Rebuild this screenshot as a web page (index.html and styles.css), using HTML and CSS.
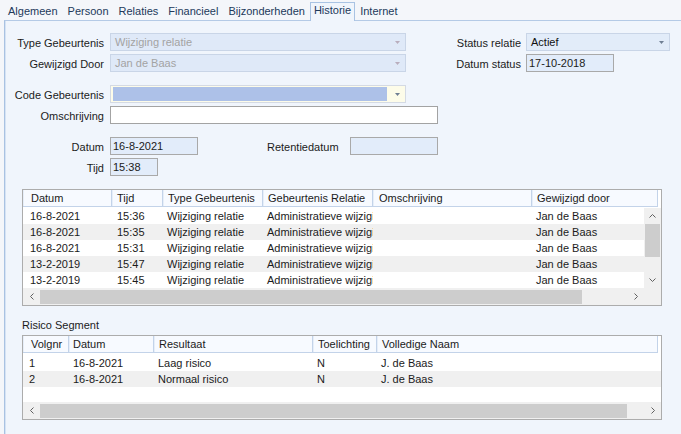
FILE: index.html
```html
<!DOCTYPE html>
<html>
<head>
<meta charset="utf-8">
<link rel="stylesheet" href="styles.css">
</head>
<body>
<div class="tabs">
  <div class="tab">Algemeen</div>
  <div class="tab">Persoon</div>
  <div class="tab">Relaties</div>
  <div class="tab">Financieel</div>
  <div class="tab">Bijzonderheden</div>
  <div class="tab active">Historie</div>
  <div class="tab">Internet</div>
</div>
<div class="panel">
  <div class="sec-top">
    <div class="tgrp">
      <div class="row">
        <div class="lbl">Type Gebeurtenis</div>
        <div class="field combo disabled w296"><span>Wijziging relatie</span><svg class="arr" width="5" height="3" viewBox="0 0 5 3"><path d="M0 0h5L2.5 3z" fill="#b9adbd"/></svg></div>
      </div>
      <div class="row">
        <div class="lbl">Gewijzigd Door</div>
        <div class="field combo disabled w296"><span>Jan de Baas</span><svg class="arr" width="5" height="3" viewBox="0 0 5 3"><path d="M0 0h5L2.5 3z" fill="#b9adbd"/></svg></div>
      </div>
    </div>
    <div class="tgrp right">
      <div class="row">
        <div class="lbl rlbl">Status relatie</div>
        <div class="field combo status w144"><span>Actief</span><svg class="arr" width="5" height="3" viewBox="0 0 5 3"><path d="M0 0h5L2.5 3z" fill="#6f7f93"/></svg></div>
      </div>
      <div class="row">
        <div class="lbl rlbl">Datum status</div>
        <div class="field input blue w88">17-10-2018</div>
      </div>
    </div>
  </div>

  <div class="grp">
    <div class="row">
      <div class="lbl">Code Gebeurtenis</div>
      <div class="field combo code w296"><span class="sel"></span><svg class="arr" width="5" height="3" viewBox="0 0 5 3"><path d="M0 0h5L2.5 3z" fill="#6f7f93"/></svg></div>
    </div>
    <div class="row">
      <div class="lbl">Omschrijving</div>
      <div class="field input white w328"></div>
    </div>
  </div>

  <div class="grp">
    <div class="row">
      <div class="lbl">Datum</div>
      <div class="field input blue w88">16-8-2021</div>
      <div class="lbl2">Retentiedatum</div>
      <div class="field input blue w88"></div>
    </div>
    <div class="row">
      <div class="lbl">Tijd</div>
      <div class="field input blue w48">15:38</div>
    </div>
  </div>

  <div class="grid g1">
    <div class="ghead">
      <div class="hc c1">Datum</div>
      <div class="hc c2">Tijd</div>
      <div class="hc c3">Type Gebeurtenis</div>
      <div class="hc c4">Gebeurtenis Relatie</div>
      <div class="hc c5">Omschrijving</div>
      <div class="hc c6">Gewijzigd door</div>
    </div>
    <div class="gbody">
      <div class="rows">
        <div class="gr"><div class="c c1">16-8-2021</div><div class="c c2">15:36</div><div class="c c3">Wijziging relatie</div><div class="c c4">Administratieve wijziging</div><div class="c c5"></div><div class="c c6">Jan de Baas</div></div>
        <div class="gr alt"><div class="c c1">16-8-2021</div><div class="c c2">15:35</div><div class="c c3">Wijziging relatie</div><div class="c c4">Administratieve wijziging</div><div class="c c5"></div><div class="c c6">Jan de Baas</div></div>
        <div class="gr"><div class="c c1">16-8-2021</div><div class="c c2">15:31</div><div class="c c3">Wijziging relatie</div><div class="c c4">Administratieve wijziging</div><div class="c c5"></div><div class="c c6">Jan de Baas</div></div>
        <div class="gr alt"><div class="c c1">13-2-2019</div><div class="c c2">15:47</div><div class="c c3">Wijziging relatie</div><div class="c c4">Administratieve wijziging</div><div class="c c5"></div><div class="c c6">Jan de Baas</div></div>
        <div class="gr"><div class="c c1">13-2-2019</div><div class="c c2">15:45</div><div class="c c3">Wijziging relatie</div><div class="c c4">Administratieve wijziging</div><div class="c c5"></div><div class="c c6">Jan de Baas</div></div>
      </div>
      <div class="vscroll">
        <div class="vbtn"><svg width="7" height="4" viewBox="0 0 7 4"><path d="M0.5 3.5L3.5 0.5L6.5 3.5" fill="none" stroke="#606060"/></svg></div>
        <div class="vthumb"></div>
        <div class="vtrack"></div>
        <div class="vbtn"><svg width="7" height="4" viewBox="0 0 7 4"><path d="M0.5 0.5L3.5 3.5L6.5 0.5" fill="none" stroke="#606060"/></svg></div>
      </div>
    </div>
    <div class="hscroll">
      <div class="hbtn"><svg width="4" height="7" viewBox="0 0 4 7"><path d="M3.5 0.5L0.5 3.5L3.5 6.5" fill="none" stroke="#606060"/></svg></div>
      <div class="hthumb t1"></div>
      <div class="htrack"></div>
      <div class="hbtn"><svg width="4" height="7" viewBox="0 0 4 7"><path d="M0.5 0.5L3.5 3.5L0.5 6.5" fill="none" stroke="#606060"/></svg></div>
      <div class="corner"></div>
    </div>
  </div>

  <div class="sublbl">Risico Segment</div>

  <div class="grid g2">
    <div class="ghead">
      <div class="hc d1">Volgnr</div>
      <div class="hc d2">Datum</div>
      <div class="hc d3">Resultaat</div>
      <div class="hc d4">Toelichting</div>
      <div class="hc d5">Volledige Naam</div>
    </div>
    <div class="rows2">
      <div class="gr"><div class="c d1">1</div><div class="c d2">16-8-2021</div><div class="c d3">Laag risico</div><div class="c d4">N</div><div class="c d5">J. de Baas</div></div>
      <div class="gr alt"><div class="c d1">2</div><div class="c d2">16-8-2021</div><div class="c d3">Normaal risico</div><div class="c d4">N</div><div class="c d5">J. de Baas</div></div>
    </div>
    <div class="hscroll">
      <div class="hbtn"><svg width="4" height="7" viewBox="0 0 4 7"><path d="M3.5 0.5L0.5 3.5L3.5 6.5" fill="none" stroke="#606060"/></svg></div>
      <div class="hthumb t2"></div>
      <div class="htrack"></div>
      <div class="hbtn"><svg width="4" height="7" viewBox="0 0 4 7"><path d="M0.5 0.5L3.5 3.5L0.5 6.5" fill="none" stroke="#606060"/></svg></div>
    </div>
  </div>
</div>
</body>
</html>
```

FILE: styles.css
```css
* { box-sizing: border-box; }
html, body { margin: 0; padding: 0; }
body {
  font-family: "Liberation Sans", Arial, sans-serif;
  font-size: 11px;
  color: #1b1b1b;
  background: #f4f6fa;
  width: 681px;
  height: 434px;
  overflow: hidden;
}

/* Tabs */
.tabs {
  display: flex;
  align-items: flex-end;
  height: 20px;
  padding-left: 3px;
}
.tab {
  height: 17px;
  line-height: 17px;
  padding: 0 5px;
  color: #22395a;
  white-space: nowrap;
}
.tab.active {
  height: 19px;
  line-height: 14px;
  padding: 0 3px;
  border: 1px solid #a9c3e3;
  border-bottom: none;
  background: #f0f5fc;
  margin-bottom: -1px;
  position: relative;
  z-index: 1;
}

/* Panel */
.panel {
  margin-left: 4px;
  height: 414px;
  border-top: 1px solid #b4cae6;
  border-left: 1px solid #a9c2e2;
  box-shadow: inset 1px 0 #d6e3f4;
  background: #f0f5fc;
  padding-top: 12px;
}

.sec-top { display: flex; align-items: flex-start; }
.tgrp.right { margin-left: 45px; }
.grp { margin-top: 13px; }
.row { display: flex; height: 18px; }
.row + .row { margin-top: 3px; }

.lbl {
  width: 99px;
  margin-right: 6px;
  text-align: right;
  line-height: 18px;
  padding-top: 1px;
  white-space: nowrap;
}
.lbl.rlbl { width: 70px; margin-right: 5px; }
.lbl2 {
  margin-left: 69px;
  width: 83px;
  line-height: 18px;
  padding-top: 1px;
  white-space: nowrap;
}

.field {
  height: 18px;
  line-height: 16px;
  white-space: nowrap;
  overflow: hidden;
}
.w296 { width: 296px; }
.w144 { width: 144px; }
.w328 { width: 328px; }
.w88 { width: 88px; }
.w48 { width: 48px; }

.combo {
  display: flex;
  align-items: center;
  justify-content: space-between;
  padding: 0 5px 0 4px;
  border: 1px solid #c9d5e7;
}
.combo.disabled { background: #dfe9f8; color: #a3a3a3; }
.combo.status { background: #e2ecf9; color: #111; }
.combo.code { background: #fdfce9; padding-left: 2px; border-color: #d4dae4; }
.sel { display: block; width: 274px; height: 14px; background: #adc1e8; }
.arr { flex: none; }

.input { border: 1px solid #a9a9a9; padding: 0 2px; }
.input.blue { background: #e2ecfa; }
.input.white { background: #fff; border-color: #a3a3a3; }

/* Grids */
.grid {
  margin-left: 17px;
  width: 640px;
  border: 1px solid #acacac;
  background: #fff;
}
.g1 { margin-top: 13px; }
.ghead {
  display: flex;
  height: 18px;
  background: #fff;
  padding-bottom: 1px;
}
.g2 .ghead { height: 19px; padding-bottom: 2px; }
.hc {
  flex: none;
  height: 17px;
  line-height: 16px;
  padding-left: 5px;
  background: #f7faff;
  border-right: 1px solid #c3d3e9;
  border-bottom: 1px solid #c3d3e9;
  box-shadow: inset 1px 0 #e6eef9;
  white-space: nowrap;
  overflow: hidden;
}
.gbody { display: flex; height: 80px; }
.rows { flex: 1; overflow: hidden; }
.rows2 { height: 47px; }
.gr { display: flex; height: 16px; line-height: 16px; }
.gr.alt { background: #f0f0f0; }
.c {
  flex: none;
  padding-left: 4px;
  white-space: nowrap;
  overflow: hidden;
}

.c1 { width: 89px; }
.c2 { width: 51px; }
.c3 { width: 100px; }
.c4 { width: 110px; }
.c5 { width: 159px; }
.c6 { width: 126px; }
.c.c1 { padding-left: 7px; }
.hc.c1 { padding-left: 8px; }
.c.c2 { padding-left: 5px; }
.hc.c5 { padding-left: 6px; }

.d1 { width: 46px; }
.d2 { width: 85px; }
.d3 { width: 159px; }
.d4 { width: 64px; }
.d5 { width: 281px; }
.c.d1 { padding-left: 6px; }
.hc.d1 { padding-left: 8px; }
.hc.d2 { padding-left: 4px; }

.vscroll {
  flex: none;
  width: 17px;
  display: flex;
  flex-direction: column;
  background: #f0f0f0;
}
.vbtn {
  height: 16px;
  display: flex;
  align-items: center;
  justify-content: center;
}
.vthumb { height: 33px; margin: 0 1px; background: #cdcdcd; }
.vtrack { flex: 1; }

.hscroll {
  display: flex;
  height: 17px;
  background: #f0f0f0;
}
.hbtn {
  flex: none;
  width: 17px;
  display: flex;
  align-items: center;
  justify-content: center;
}
.hthumb { flex: none; margin: 2px 0 1px; background: #cdcdcd; }
.hthumb.t1 { width: 542px; }
.hthumb.t2 { width: 587px; }
.htrack { flex: 1; }
.corner { flex: none; width: 17px; background: #f0f0f0; }

.sublbl {
  margin: 12px 0 3px 17px;
  line-height: 14px;
}
```
